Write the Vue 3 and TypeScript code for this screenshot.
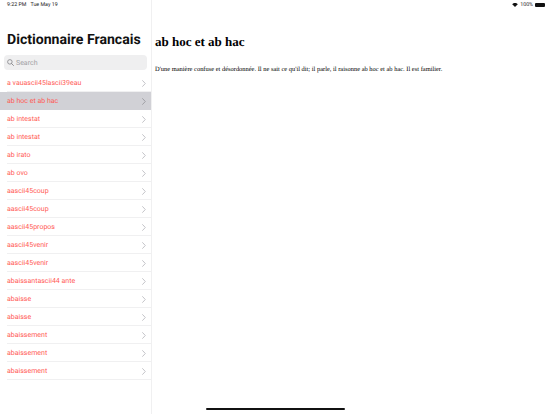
<script setup lang="ts">
const items: string[] = [
  'a vauascii45lascii39eau', 'ab hoc et ab hac', 'ab intestat', 'ab intestat', 'ab irato', 'ab ovo',
  'aascii45coup', 'aascii45coup', 'aascii45propos', 'aascii45venir', 'aascii45venir',
  'abaissantascii44 ante', 'abaisse', 'abaisse', 'abaissement', 'abaissement', 'abaissement',
]
const selected = 1
</script>

<template>
  <div class="page">
    <aside class="side">
      <div class="clock"><span>9:22 PM</span><span>Tue May 19</span></div>
      <h1 class="title">Dictionnaire Francais</h1>
      <div class="search">
        <svg class="glass" width="7" height="7" viewBox="0 0 9 9">
          <circle cx="3.7" cy="3.7" r="2.9" fill="none" stroke="#8a8a8e" stroke-width="1.1" />
          <path d="M5.8 5.8 8.4 8.4" stroke="#8a8a8e" stroke-width="1.2" stroke-linecap="round" />
        </svg>
        <span>Search</span>
      </div>
      <ul class="list">
        <li v-for="(item, i) in items" :key="i" class="row" :class="{ on: i === selected }">
          <div class="inner">
            <span class="label">{{ item }}</span>
            <svg class="chev" width="4" height="7" viewBox="0 0 4 7">
              <path d="M.6.6 3.3 3.5.6 6.4" fill="none" stroke-width="1" stroke-linecap="round" stroke-linejoin="round" />
            </svg>
          </div>
        </li>
      </ul>
    </aside>
    <main class="detail">
      <div class="status">
        <svg width="6" height="4" viewBox="0 0 14 10">
          <path d="M7 10 0 3a10 10 0 0 1 14 0z" fill="#111" />
        </svg>
        <span>100%</span>
        <span class="battery"></span>
      </div>
      <h2 class="word">ab hoc et ab hac</h2>
      <p class="def">D'une manière confuse et désordonnée. Il ne sait ce qu'il dit; il parle, il raisonne ab hoc et ab hac. Il est familier.</p>
      <div class="home"></div>
    </main>
  </div>
</template>

<style scoped>
.page {
  display: flex;
  width: 552px;
  height: 414px;
  overflow: hidden;
  background: #fff;
  text-rendering: geometricPrecision;
}
.side {
  width: 152px;
  flex: none;
  box-sizing: border-box;
  border-right: 1px solid #f0f0f1;
  font-family: Roboto, "Liberation Sans", sans-serif;
}
.clock {
  display: flex;
  gap: 4px;
  padding: 2px 0 0 7px;
  height: 8px;
  font-size: 5.3px;
  line-height: 6px;
  color: #222;
}
.title {
  margin: 20px 0 0 7px;
  font-size: 14.1px;
  line-height: 20px;
  font-weight: 700;
  color: #111;
  white-space: nowrap;
}
.search {
  display: flex;
  align-items: center;
  gap: 2px;
  margin: 5px 4px 0;
  padding-left: 3px;
  height: 15px;
  border-radius: 4px;
  background: #efeff0;
  font-size: 7px;
  color: #a0a0a4;
}
.list {
  list-style: none;
  margin: 4px 0 0;
  padding: 0;
}
.row {
  height: 18px;
  padding-left: 7px;
}
.row.on {
  background: #d1d1d6;
}
.inner {
  display: flex;
  align-items: center;
  justify-content: space-between;
  box-sizing: border-box;
  height: 18px;
  padding: 1px 5px 0 0;
  border-bottom: 1px solid #f0f0f1;
}
.row.on .inner {
  border-bottom-color: transparent;
}
.label {
  font-size: 7px;
  color: #ff5a55;
}
.chev path {
  stroke: #c4c4c8;
}
.row.on .chev path {
  stroke: #a0a0a5;
}
.detail {
  position: relative;
  flex: 1;
  font-family: "Liberation Serif", serif;
  color: #000;
}
.status {
  display: flex;
  align-items: center;
  justify-content: flex-end;
  gap: 2px;
  height: 10px;
  padding-right: 7px;
  font-family: Roboto, "Liberation Sans", sans-serif;
  font-size: 5.3px;
  color: #222;
}
.battery {
  width: 10px;
  height: 4px;
  border-radius: 1px;
  background: #111;
}
.word {
  margin: 24px 0 0 3px;
  font-size: 13px;
  line-height: 16px;
  font-weight: 700;
}
.def {
  margin: 15px 0 0 3px;
  font-size: 6.45px;
  line-height: 9px;
  white-space: nowrap;
}
.home {
  position: absolute;
  left: 54px;
  bottom: 4px;
  width: 139px;
  height: 2px;
  border-radius: 1px;
  background: #111;
}
</style>
